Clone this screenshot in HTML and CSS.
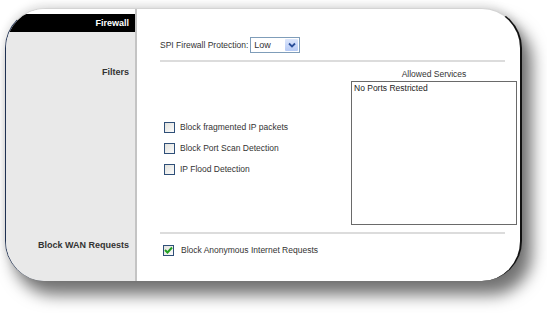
FILE: index.html
```html
<!DOCTYPE html>
<html lang="en">
<head>
  <meta charset="UTF-8">
  <title>Firewall</title>
  <link rel="stylesheet" href="styles.css">
</head>
<body>

<div class="frame">
  <div class="card">
    <div class="side">
      <div class="side-title">Firewall</div>
      <div class="side-label filters-label">Filters</div>
      <div class="side-label wan-label">Block WAN Requests</div>
    </div>

    <div class="main">
      <div class="spi-row">
        <span>SPI Firewall Protection:</span>
        <div class="select">
          <span class="select-value">Low</span>
          <span class="select-btn">
            <svg width="8" height="6" viewBox="0 0 8 6"><path d="M1 1.5 L4 4.5 L7 1.5" fill="none" stroke="#2b4f9a" stroke-width="1.8"/></svg>
          </span>
        </div>
      </div>

      <div class="rule"></div>

      <div class="filters">
        <div class="checks">
          <label class="check-row"><span class="box"></span>Block fragmented IP packets</label>
          <label class="check-row"><span class="box"></span>Block Port Scan Detection</label>
          <label class="check-row"><span class="box"></span>IP Flood Detection</label>
        </div>
        <div class="services">
          <div class="services-title">Allowed Services</div>
          <div class="services-box">No Ports Restricted</div>
        </div>
      </div>

      <div class="rule"></div>

      <label class="check-row wan-row">
        <span class="box checked">
          <svg width="9" height="8" viewBox="0 0 9 8"><path d="M1 4 L3.5 6.5 L8 1.5" fill="none" stroke="#22a022" stroke-width="2"/></svg>
        </span>
        Block Anonymous Internet Requests
      </label>
    </div>
  </div>
</div>

</body>
</html>
```

FILE: styles.css
```css
html, body {
  height: 100%;
}
body {
  margin: 0;
  background: #fff;
  font-family: "Liberation Sans", Arial, sans-serif;
  font-size: 8.5px;
  color: #333;
}
.frame {
  height: 313px;
  padding: 8px 0 0 5px;
  box-sizing: border-box;
}
.card {
  display: grid;
  grid-template-columns: 129px 1fr;
  width: 514px;
  height: 272px;
  background: #fff;
  border-top: 1px solid #d4d4d4;
  border-left: 1px solid #1f3152;
  border-right: 2px solid #111;
  border-radius: 40px;
  overflow: hidden;
  box-shadow: 9px 13px 16px 1px rgba(0,0,0,0.55), 0 -3px 8px rgba(0,0,0,0.12);
}
.side {
  display: flex;
  flex-direction: column;
  background: linear-gradient(to bottom, #fff 0, #fff 5px, #e9e9e9 5px);
}
.side-title {
  margin-top: 5px;
  height: 18px;
  line-height: 18px;
  background: #000;
  color: #fff;
  font-weight: bold;
  font-size: 9px;
  text-align: right;
  padding-right: 6px;
  border-radius: 24px 0 0 0;
}
.side-label {
  text-align: right;
  padding-right: 6px;
  font-weight: bold;
  font-size: 9px;
  line-height: 12px;
}
.filters-label {
  margin-top: 34px;
}
.wan-label {
  margin-top: 161px;
}
.main {
  border-left: 2px solid #c4c4c4;
  padding: 0 3px 0 23px;
}
.spi-row {
  display: flex;
  align-items: center;
  gap: 2px;
  margin-top: 28px;
  height: 16px;
}
.select {
  display: flex;
  align-items: stretch;
  width: 48px;
  height: 14px;
  border: 1px solid #7f9db9;
  background: #fff;
}
.select-value {
  flex: 1;
  padding-left: 3px;
  line-height: 14px;
  font-size: 9px;
}
.select-btn {
  display: flex;
  align-items: center;
  justify-content: center;
  width: 13px;
  margin: 1px;
  background: linear-gradient(to bottom, #dce6fb, #b6caf5);
  border-radius: 1px;
}
.rule {
  height: 2px;
  background: #dcdcdc;
  margin: 7px 12px 0 0;
}
.filters {
  display: flex;
  justify-content: space-between;
}
.checks {
  display: flex;
  flex-direction: column;
  gap: 9px;
  padding: 59px 0 0 4px;
}
.check-row {
  display: flex;
  align-items: center;
  gap: 5px;
  height: 12px;
}
.box {
  display: flex;
  align-items: center;
  justify-content: center;
  width: 9px;
  height: 9px;
  border: 1px solid #2f4f78;
  background: linear-gradient(135deg, #e2e2dd, #fbfbfb);
}
.services {
  width: 166px;
}
.services-title {
  margin-top: 6px;
  height: 12px;
  line-height: 12px;
  text-align: center;
}
.services-box {
  margin-top: 1px;
  height: 140px;
  border: 1px solid #6a6a6a;
  padding: 1px 2px;
  line-height: 11px;
  color: #222;
}
.wan-row {
  margin-top: 10px;
  padding-left: 3px;
  gap: 7px;
}
```
